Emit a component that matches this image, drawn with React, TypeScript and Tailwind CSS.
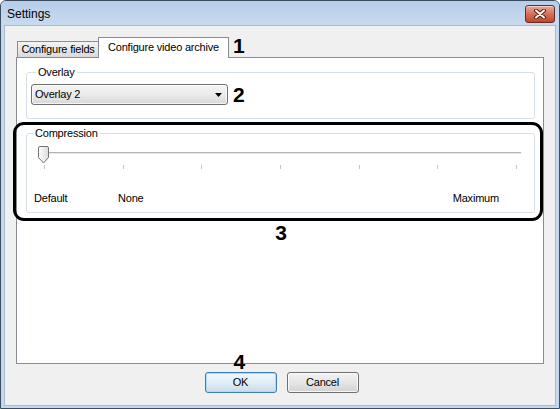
import React from 'react'

function CloseButton() {
  return (
    <div className="mt-[4px] mr-[4px] w-[30px] h-[18px] rounded-[3px] border border-[#6b2a1f] bg-gradient-to-b from-[#eaa999] via-[#d6705a] to-[#c0452b] shadow-[inset_0_1px_0_rgba(255,255,255,0.5)] flex items-center justify-center">
      <svg width="14" height="10" viewBox="0 0 14 10">
        <path d="M3 1.5 L11 8.5 M11 1.5 L3 8.5" stroke="#5a1c12" strokeWidth="4" strokeLinecap="round" />
        <path d="M3 1.5 L11 8.5 M11 1.5 L3 8.5" stroke="#ffffff" strokeWidth="2" strokeLinecap="round" />
      </svg>
    </div>
  )
}

function SliderThumb() {
  return (
    <svg width="11" height="18" viewBox="0 0 11 18" className="absolute left-[-2px] top-0">
      <defs>
        <linearGradient id="thumb" x1="0" y1="0" x2="1" y2="0">
          <stop offset="0" stopColor="#ffffff" />
          <stop offset="1" stopColor="#dcdcdc" />
        </linearGradient>
      </defs>
      <path d="M2 0.5 H9 Q10.5 0.5 10.5 2 V11.5 L5.5 17 L0.5 11.5 V2 Q0.5 0.5 2 0.5 Z" fill="url(#thumb)" stroke="#737373" />
    </svg>
  )
}

function Annotation({ n, className = '' }: { n: string; className?: string }) {
  return <div className={`text-[21px] font-bold leading-[21px] tracking-normal text-black ${className}`}>{n}</div>
}

export default function App() {
  const ticks = [0, 1, 2, 3, 4, 5, 6]
  return (
    <div className="w-[560px] h-[409px] font-['Liberation_Sans',Arial,sans-serif] text-[11px] tracking-[-0.2px] text-black select-none">
      <div className="w-full h-full flex flex-col border border-[#3d4d60] rounded-t-[6px] bg-[#c6d8ee] overflow-hidden">
        {/* title bar */}
        <div className="h-[24px] shrink-0 flex items-start justify-between bg-gradient-to-b from-[#b7cee8] to-[#c8daef]">
          <span className="text-[12px] leading-[14px] tracking-normal pl-[6px] pt-[6px]">Settings</span>
          <CloseButton />
        </div>

        {/* body */}
        <div className="flex-1 mx-[3px] mb-[2px] border border-[#a8bbd0] bg-[#f0f0f0] flex flex-col pt-[11px] px-[11px]">
          {/* tabs */}
          <div className="h-[20px] flex items-end">
            <div className="ml-[1px] w-[82px] h-[16px] border-l border-t border-r border-[#898c95] bg-gradient-to-b from-[#f3f3f3] to-[#dadada] flex items-center justify-center leading-[13px]">
              Configure fields
            </div>
            <div className="relative z-10 -ml-[1px] -mb-[1px] w-[131px] h-[21px] border-l border-t border-r border-[#898c95] bg-white flex items-center justify-center leading-[13px] pb-[2px]">
              Configure video archive
            </div>
            <Annotation n="1" className="self-start -mt-[2px] ml-[4px]" />
          </div>

          {/* panel */}
          <div className="h-[307px] border border-[#898c95] bg-white pt-[8px] pl-[9px] pr-[8px] flex flex-col">
            <fieldset className="border border-[#d5dfe5] rounded-[3px] pl-[4px] pb-[13px]">
              <legend className="ml-[5px] px-[2px] leading-[13px]">Overlay</legend>
              <div className="mt-[5px] flex items-start">
                <div className="w-[197px] h-[21px] border border-[#707070] rounded-[3px] bg-gradient-to-b from-[#f4f4f4] via-[#ebebeb] to-[#d8d8d8] shadow-[inset_0_0_0_1px_rgba(255,255,255,0.7)] flex items-center justify-between pl-[3px] pr-[5px]">
                  <span className="leading-[13px]">Overlay 2</span>
                  <svg width="7" height="4" viewBox="0 0 7 4">
                    <path d="M0 0 H7 L3.5 4 Z" fill="#000" />
                  </svg>
                </div>
                <Annotation n="2" className="ml-[5px]" />
              </div>
            </fieldset>

            <div className="relative mt-[8px]">
              <fieldset className="border border-[#d5dfe5] rounded-[3px] pb-[7px]">
                <legend className="ml-[6px] px-[2px] leading-[13px]">Compression</legend>
                <div className="relative mt-[6px] mx-[13px] h-[25px]">
                  <div className="absolute left-0 right-0 top-[6px] h-[2px] border-t border-[#b3b3b3] bg-[#e9e9e9]" />
                  <div className="absolute left-[4px] right-[4px] top-[19px] h-[4px] flex justify-between">
                    {ticks.map((t) => (
                      <div key={t} className="w-[1px] h-[4px] bg-[#c4c4c4]" />
                    ))}
                  </div>
                  <SliderThumb />
                </div>
                <div className="mt-[21px] flex leading-[13px] pl-[7px] pr-[35px]">
                  <span className="w-[84px]">Default</span>
                  <span>None</span>
                  <span className="ml-auto">Maximum</span>
                </div>
              </fieldset>
              <div className="absolute -left-[13px] -right-[8px] -top-[5px] -bottom-[8px] border-[3px] border-black rounded-[11px] pointer-events-none" />
            </div>

            <Annotation n="3" className="mt-[9px] text-center pl-[1px]" />
          </div>

          {/* buttons */}
          <div className="mt-[8px] flex justify-center gap-[10px] pl-[3px]">
            <div className="relative w-[72px] h-[21px] rounded-[3px] border border-[#3c7fb1] bg-gradient-to-b from-[#eef7fc] via-[#e2eef6] to-[#c8dceb] shadow-[inset_0_0_0_1px_#a8dcf7] flex items-center justify-center leading-[13px]">
              OK
              <Annotation n="4" className="absolute left-[28px] -top-[22px]" />
            </div>
            <div className="w-[72px] h-[21px] rounded-[3px] border border-[#707070] bg-gradient-to-b from-[#f2f2f2] via-[#e6e6e6] to-[#d2d2d2] shadow-[inset_0_0_0_1px_rgba(255,255,255,0.8)] flex items-center justify-center leading-[13px]">
              Cancel
            </div>
          </div>
        </div>
      </div>
    </div>
  )
}
